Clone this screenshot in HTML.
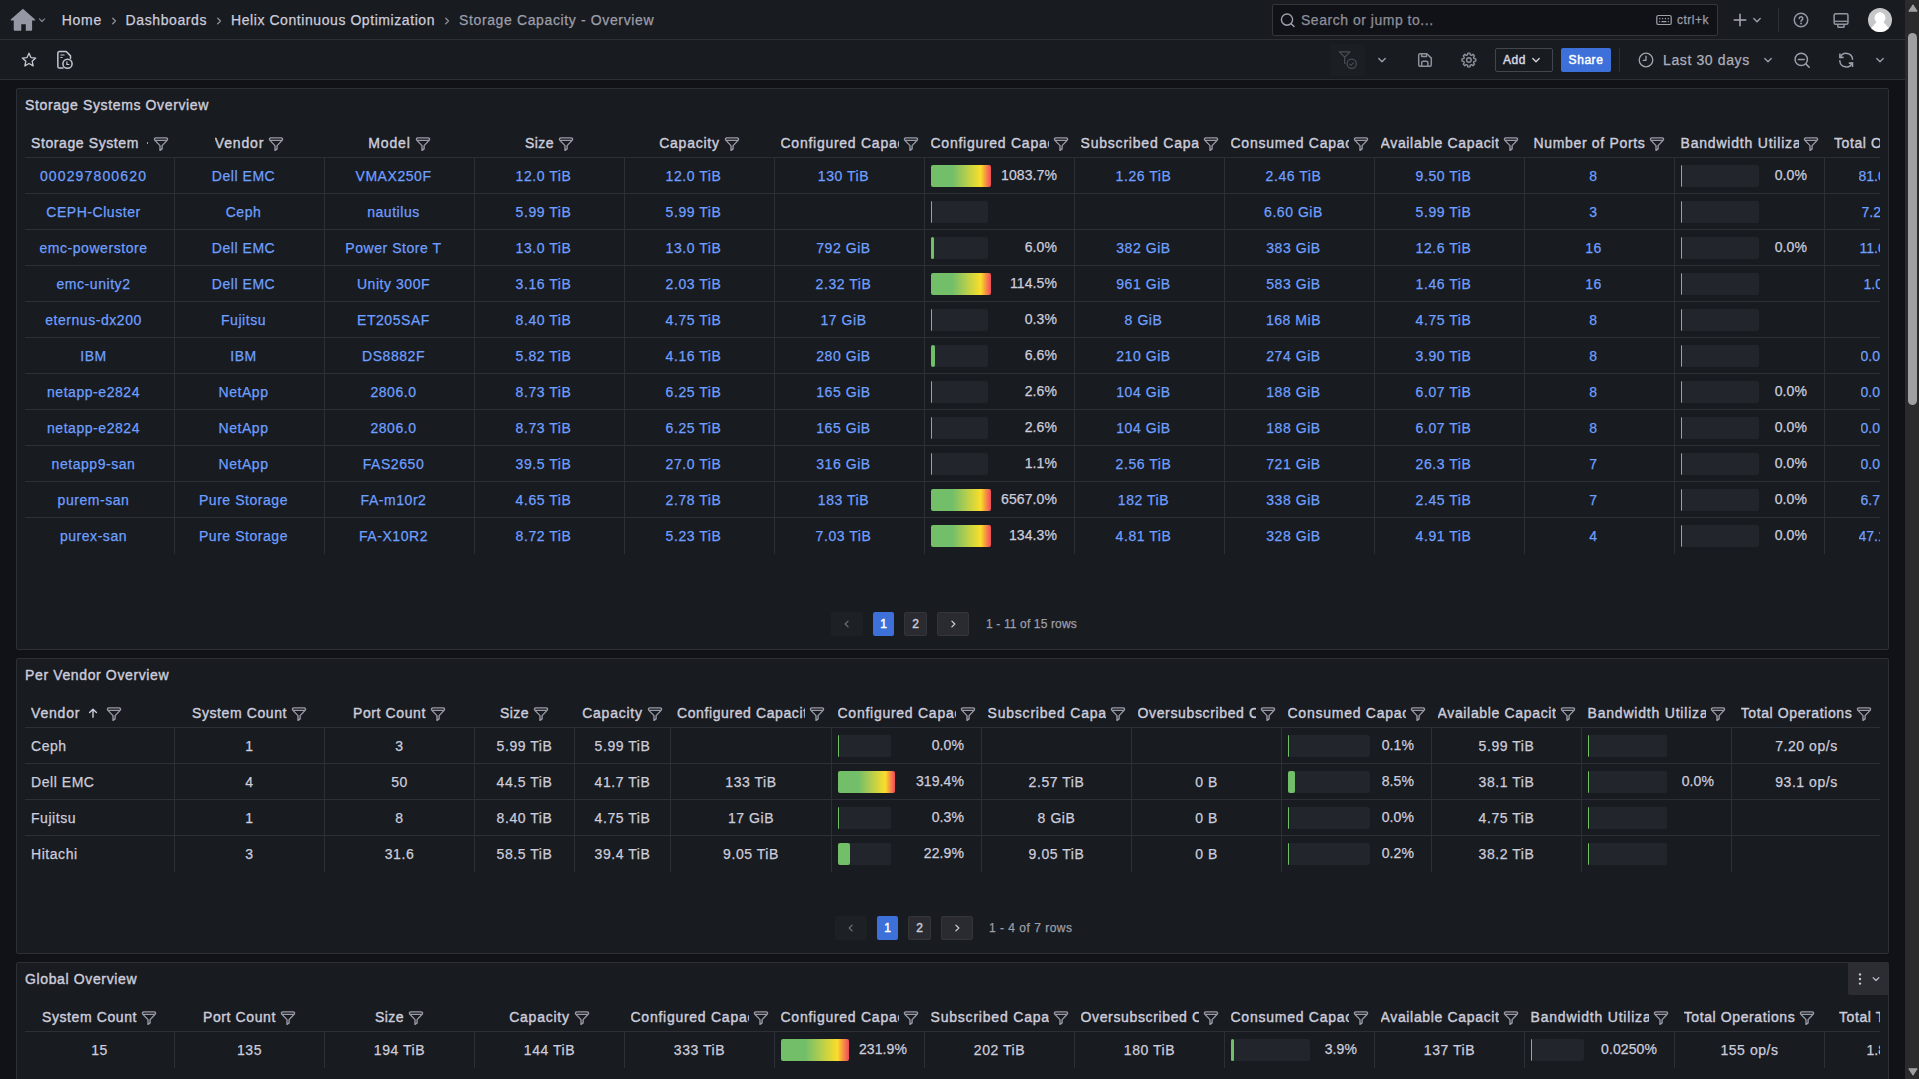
<!DOCTYPE html>
<html lang="en"><head><meta charset="utf-8"><title>Storage Capacity - Overview - Dashboards - Grafana</title>
<style>
*{box-sizing:border-box;margin:0;padding:0}
html,body{width:1919px;height:1079px;overflow:hidden;background:#111217}
body{font-family:"Liberation Sans",sans-serif;font-size:14px;color:#ccccdc;position:relative;letter-spacing:.55px;-webkit-text-stroke:.25px currentColor}
.abs{position:absolute}
.nav{position:absolute;left:0;top:0;width:1905px;height:40px;background:#181b1f;border-bottom:1px solid #2d2f36}
.tb{position:absolute;left:0;top:40px;width:1905px;height:40px;background:#181b1f;border-bottom:1px solid #2d2f36}
.t{position:absolute;white-space:nowrap;line-height:20px;height:20px}
.panel{position:absolute;left:16px;width:1873px;background:#181b1f;border:1px solid #2d2f36;border-radius:2px;overflow:hidden}
.ptitle{position:absolute;left:8px;top:6px;-webkit-text-stroke:.4px #ccccdc;letter-spacing:.63px;line-height:20px;white-space:nowrap;color:#ccccdc;font-size:14px}
.tbl{position:absolute;left:8px;width:1855px;overflow:hidden}
.hl{position:absolute;left:0;height:1px;width:1855px;background:#2d2f36}
.vl{position:absolute;width:1px;background:#2d2f36}
.c{position:absolute;height:36px;line-height:36px;text-align:center;white-space:nowrap;overflow:hidden}
.c.l{color:#6e9fff}
.h{position:absolute;top:6px;height:28px;line-height:28px;white-space:nowrap;-webkit-text-stroke:.4px #ccccdc;letter-spacing:.6px;color:#ccccdc;overflow:hidden;display:flex;justify-content:center;align-items:center;padding:0 6px}
.h span{display:block;overflow:hidden;max-width:118px;height:28px;flex:none}
.h svg{flex:none;margin-left:4px;margin-top:2px}
.g{position:absolute;height:22px;border-radius:2px}
.gt{position:absolute;height:22px;line-height:22px;text-align:right;white-space:nowrap;letter-spacing:.1px}
.pg{position:absolute;height:24px;border-radius:2px;text-align:center;line-height:24px;font-size:12px;-webkit-text-stroke:.45px currentColor;letter-spacing:0}
.sb{position:absolute;left:1905px;top:0;width:14px;height:1079px;background:#2b2b2b}
</style></head><body>

<div class="nav">
<svg class="abs" style="left:9px;top:7px" width="28" height="25" viewBox="0 0 28 25"><path d="M13.900 1.700L1.700 12.500Q1.100 13.400 2.300 13.400H4.750V22.800a1 1 0 0 0 1 1H12.250V17.200H16.800V23.800H22.100a1 1 0 0 0 1-1V13.400H25.500Q26.700 13.400 26.100 12.500Z" fill="#9697a4"/></svg>
<svg class="abs" style="left:37px;top:15px" width="10" height="10" viewBox="0 0 10 10"><path d="M2.400 3.900L5 6.500L7.600 3.900" fill="none" stroke="#7f808c" stroke-width="1.300" stroke-linecap="round" stroke-linejoin="round"/></svg>
<div class="t" style="left:61.8px;top:10px;color:#ccccdc;letter-spacing:0.7px">Home</div>
<div class="t" style="left:125.6px;top:10px;color:#ccccdc;letter-spacing:0.6px">Dashboards</div>
<div class="t" style="left:231px;top:10px;color:#ccccdc;letter-spacing:0.57px">Helix Continuous Optimization</div>
<div class="t" style="left:459px;top:10px;color:#9d9eaa;letter-spacing:0.63px">Storage Capacity - Overview</div>
<svg class="abs" style="left:108.8px;top:16.200px" width="10" height="10" viewBox="0 0 10 10"><path d="M3.700 2.200 L6.500 5 L3.700 7.800" fill="none" stroke="#8e8f9b" stroke-width="1.300" stroke-linecap="round" stroke-linejoin="round"/></svg>
<svg class="abs" style="left:213.6px;top:16.200px" width="10" height="10" viewBox="0 0 10 10"><path d="M3.700 2.200 L6.500 5 L3.700 7.800" fill="none" stroke="#8e8f9b" stroke-width="1.300" stroke-linecap="round" stroke-linejoin="round"/></svg>
<svg class="abs" style="left:441.9px;top:16.200px" width="10" height="10" viewBox="0 0 10 10"><path d="M3.700 2.200 L6.500 5 L3.700 7.800" fill="none" stroke="#8e8f9b" stroke-width="1.300" stroke-linecap="round" stroke-linejoin="round"/></svg>
<div class="abs" style="left:1272px;top:4px;width:446px;height:32px;background:#111217;border:1px solid #34363d;border-radius:2px"></div>
<svg class="abs" style="left:1279px;top:12px" width="17" height="17" viewBox="0 0 17 17"><circle cx="8" cy="7.6" r="5.6" fill="none" stroke="#9fa0ad" stroke-width="1.4"/><path d="M12.2 11.8 L15 14.6" stroke="#9fa0ad" stroke-width="1.4" stroke-linecap="round"/></svg>
<div class="t" style="left:1301px;top:10px;color:#8e8f9b;letter-spacing:.52px">Search or jump to...</div>
<svg class="abs" style="left:1656px;top:14px" width="16" height="12" viewBox="0 0 16 12"><rect x="0.8" y="1.5" width="14.4" height="9" rx="1.6" fill="none" stroke="#9fa0ad" stroke-width="1.2"/><path d="M3.2 4.6h1.2M6 4.6h1.2M8.8 4.6h1.2M11.6 4.6h1.2M3.2 7.6h1M5.6 7.6h4.8M11.8 7.6h1" stroke="#9fa0ad" stroke-width="1.1"/></svg>
<div class="t" style="left:1677px;top:10px;color:#9d9eaa;font-size:12px;letter-spacing:.5px">ctrl+k</div>
<svg class="abs" style="left:1733px;top:13px" width="14" height="14" viewBox="0 0 14 14"><path d="M7 1.2V12.8M1.2 7H12.8" stroke="#a9aab6" stroke-width="1.5" stroke-linecap="round"/></svg>
<svg class="abs" style="left:1752px;top:15px" width="10" height="10" viewBox="0 0 10 10"><path d="M1.800 3.600 L5 6.800 L8.200 3.600" fill="none" stroke="#9c9daa" stroke-width="1.400" stroke-linecap="round" stroke-linejoin="round"/></svg>
<div class="abs" style="left:1778px;top:8px;width:1px;height:24px;background:#2f3137"></div>
<svg class="abs" style="left:1792px;top:11px" width="18" height="18" viewBox="0 0 18 18"><circle cx="9" cy="9" r="6.750" fill="none" stroke="#9596a3" stroke-width="1.500"/><path d="M7.250 7.500a1.750 1.750 0 1 1 2.700 1.500c-.600.400-.950.700-.950 1.350" fill="none" stroke="#9596a3" stroke-width="1.500" stroke-linecap="round"/><circle cx="9" cy="12.500" r=".950" fill="#9596a3"/></svg>
<svg class="abs" style="left:1832px;top:11.500px" width="18" height="18" viewBox="0 0 18 18"><rect x="2.150" y="1.800" width="13.800" height="10.400" rx="1.500" fill="none" stroke="#9596a3" stroke-width="1.500"/><path d="M2.400 9.300H15.600" stroke="#9596a3" stroke-width="1.300"/><path d="M5.900 12.400v2.100a.8.800 0 0 0 .8.800h4.600a.8.800 0 0 0 .8-.8v-2.100" fill="none" stroke="#9596a3" stroke-width="1.500"/></svg>
<svg class="abs" style="left:1868px;top:8px" width="24" height="24" viewBox="0 0 24 24"><defs><clipPath id="av"><circle cx="12" cy="12" r="12"/></clipPath></defs><circle cx="12" cy="12" r="12" fill="#c6c7c8"/><g clip-path="url(#av)" fill="#fff"><circle cx="12" cy="9.800" r="5.500"/><path d="M9 13.400L0.200 23.600V25H23.800V23.600L15 13.400Z"/></g></svg>
</div>
<div class="tb">
<svg class="abs" style="left:20px;top:11px" width="18" height="18" viewBox="0 0 18 18"><path d="M9 2.2 L10.95 6.55 L15.7 7.05 L12.15 10.2 L13.15 14.9 L9 12.5 L4.85 14.9 L5.85 10.2 L2.3 7.05 L7.05 6.55 Z" fill="none" stroke="#c5c6d4" stroke-width="1.35" stroke-linejoin="round"/></svg>
<svg class="abs" style="left:56px;top:10px" width="20" height="20" viewBox="0 0 20 20"><path d="M7 18H3.450a1.600 1.600 0 0 1-1.600-1.600V3.150a1.600 1.600 0 0 1 1.600-1.600H10.200L14.500 5.900V8.400" fill="none" stroke="#c5c6d4" stroke-width="1.500" stroke-linejoin="round" stroke-linecap="round"/><path d="M4.400 5h4.200M4.400 7.500h2.100" stroke="#c5c6d4" stroke-width="1.100"/><circle cx="11.500" cy="13.750" r="4.600" fill="#181b1f" stroke="#c5c6d4" stroke-width="1.500"/><path d="M10.900 11.500v3h2.500" fill="none" stroke="#c5c6d4" stroke-width="1.200"/></svg>
<div class="abs" style="left:1330px;top:4px;width:35px;height:32px;background:#1b1e23;border-radius:2px"></div>
<svg class="abs" style="left:1337px;top:9px" width="24" height="22" viewBox="0 0 24 22"><path d="M2.400 2.800H13L7.700 8.200Z M7.700 8.200V15" fill="none" stroke="#4d4f58" stroke-width="1.200" stroke-linejoin="round" stroke-linecap="butt"/><circle cx="14.700" cy="14.750" r="4.600" fill="#1b1e23" stroke="#4d4f58" stroke-width="1.200"/><path d="M12.600 14.900l1.500 1.400 2.600-2.800" fill="none" stroke="#4d4f58" stroke-width="1.100"/></svg>
<svg class="abs" style="left:1377px;top:15px" width="10" height="10" viewBox="0 0 10 10"><path d="M1.800 3.600 L5 6.800 L8.200 3.600" fill="none" stroke="#9c9daa" stroke-width="1.400" stroke-linecap="round" stroke-linejoin="round"/></svg>
<svg class="abs" style="left:1416px;top:11px" width="18" height="18" viewBox="0 0 18 18"><path d="M4.200 2.700H10.800L15.300 7.100V13.800a1.500 1.500 0 0 1-1.500 1.500H4.200a1.500 1.500 0 0 1-1.500-1.500V4.200a1.500 1.500 0 0 1 1.500-1.500z" fill="none" stroke="#8e909d" stroke-width="1.500" stroke-linejoin="round"/><path d="M5.700 3v2.600h4.800V3M5.700 15.200v-3.400a1.500 1.500 0 0 1 1.500-1.500h3.200a1.500 1.500 0 0 1 1.500 1.500v3.400" fill="none" stroke="#8e909d" stroke-width="1.500" stroke-linejoin="round"/></svg>
<svg class="abs" style="left:1460px;top:11px" width="18" height="18" viewBox="0 0 18 18"><path d="M7.53 3.88 L7.80 2.09 L10.00 2.09 L10.27 3.88 L11.55 4.41 L13.01 3.34 L14.56 4.89 L13.49 6.35 L14.02 7.63 L15.81 7.90 L15.81 10.10 L14.02 10.37 L13.49 11.65 L14.56 13.11 L13.01 14.66 L11.55 13.59 L10.27 14.12 L10.00 15.91 L7.80 15.91 L7.53 14.12 L6.25 13.59 L4.79 14.66 L3.24 13.11 L4.31 11.65 L3.78 10.37 L1.99 10.10 L1.99 7.90 L3.78 7.63 L4.31 6.35 L3.24 4.89 L4.79 3.34 L6.25 4.41Z" fill="none" stroke="#8e909d" stroke-width="1.400" stroke-linejoin="round"/><circle cx="8.900" cy="9" r="2.300" fill="none" stroke="#8e909d" stroke-width="1.400"/></svg>
<div class="abs" style="left:1495px;top:8px;width:58px;height:24px;border:1px solid #44464e;border-radius:2px"></div>
<div class="t" style="left:1503px;top:10px;font-size:12px;-webkit-text-stroke:.45px #d5d6e2;color:#d5d6e2;letter-spacing:.5px">Add</div>
<svg class="abs" style="left:1531px;top:15px" width="10" height="10" viewBox="0 0 10 10"><path d="M1.800 3.600 L5 6.800 L8.200 3.600" fill="none" stroke="#d0d1dd" stroke-width="1.400" stroke-linecap="round" stroke-linejoin="round"/></svg>
<div class="abs" style="left:1561px;top:8px;width:50px;height:24px;background:#3d71d9;border-radius:2px"></div>
<div class="t" style="left:1561px;top:10px;width:50px;text-align:center;font-size:12px;-webkit-text-stroke:.45px #fff;color:#fff;letter-spacing:.55px">Share</div>
<div class="abs" style="left:1619px;top:8px;width:1px;height:24px;background:#2f3137"></div>
<svg class="abs" style="left:1637px;top:11px" width="18" height="18" viewBox="0 0 18 18"><circle cx="9" cy="9" r="6.800" fill="none" stroke="#a3a4b1" stroke-width="1.300"/><path d="M9 5.200V9.300H6.200" fill="none" stroke="#a3a4b1" stroke-width="1.300" stroke-linecap="round" stroke-linejoin="round"/></svg>
<div class="t" style="left:1663px;top:10px;color:#adaebd;letter-spacing:.62px">Last 30 days</div>
<svg class="abs" style="left:1763px;top:15px" width="10" height="10" viewBox="0 0 10 10"><path d="M1.800 3.600 L5 6.800 L8.200 3.600" fill="none" stroke="#9c9daa" stroke-width="1.400" stroke-linecap="round" stroke-linejoin="round"/></svg>
<svg class="abs" style="left:1792px;top:11px" width="19" height="18" viewBox="0 0 19 18"><circle cx="9.250" cy="8.400" r="6.150" fill="none" stroke="#9c9daa" stroke-width="1.500"/><path d="M6.300 8.400h5.900" stroke="#9c9daa" stroke-width="1.500" stroke-linecap="round"/><path d="M13.800 12.900l3.400 3.300" stroke="#9c9daa" stroke-width="1.600" stroke-linecap="round"/></svg>
<svg class="abs" style="left:1837px;top:11px" width="18" height="18" viewBox="0 0 18 18"><path d="M3.200 6.400A6.400 6.400 0 0 1 15.550 8.300M2.850 9.700A6.400 6.400 0 0 0 15.200 11.900" fill="none" stroke="#9c9daa" stroke-width="1.500" stroke-linecap="round"/><path d="M2.900 2.500v3.900h3.700M15.500 16v-3.900h-3.700" fill="none" stroke="#9c9daa" stroke-width="1.600" stroke-linecap="butt" stroke-linejoin="miter"/></svg>
<svg class="abs" style="left:1875px;top:15px" width="10" height="10" viewBox="0 0 10 10"><path d="M1.800 3.600 L5 6.800 L8.200 3.600" fill="none" stroke="#9c9daa" stroke-width="1.400" stroke-linecap="round" stroke-linejoin="round"/></svg>
</div>
<div class="sb"><svg class="abs" style="left:2.600px;top:4.400px" width="10" height="8" viewBox="0 0 10 8"><path d="M5 0.800L9.200 7.200H0.800z" fill="#a0a0a0" stroke="#a0a0a0" stroke-width="1" stroke-linejoin="round"/></svg><div class="abs" style="left:3px;top:33px;width:9px;height:372px;border-radius:5px;background:#a0a0a0"></div><svg class="abs" style="left:2.600px;top:1068.400px" width="10" height="8" viewBox="0 0 10 8"><path d="M5 7.200L9.200 0.800H0.800z" fill="#a0a0a0" stroke="#a0a0a0" stroke-width="1" stroke-linejoin="round"/></svg></div>
<div class="panel" style="top:88px;height:562px">
<div class="ptitle">Storage Systems Overview</div>
<div class="tbl" style="top:34px;height:431px">
<div class="h" style="left:0px;width:149px;justify-content:flex-start">
<span style="max-width:108px">Storage System</span>
<i style="display:block;flex:none;width:1px;height:2px;background:#a0a1ad;margin:0 5px 0 8px"></i>
<svg width="16" height="16" viewBox="0 0 16 16" style="margin-left:0"><path d="M3 1.900H13C14.600 1.900 15 3.400 14.100 4.400L9.100 9.600V12.900L7 14.400V9.600L1.900 4.400C1 3.400 1.400 1.900 3 1.900ZM2.200 4.400H13.800" fill="none" stroke="#9a9ba8" stroke-width="1.350" stroke-linejoin="round"/></svg>
</div>
<div class="h" style="left:150px;width:149px">
<span style="letter-spacing:0.82px">Vendor</span>
<svg width="16" height="16" viewBox="0 0 16 16" ><path d="M3 1.900H13C14.600 1.900 15 3.400 14.100 4.400L9.100 9.600V12.900L7 14.400V9.600L1.900 4.400C1 3.400 1.400 1.900 3 1.900ZM2.200 4.400H13.800" fill="none" stroke="#9a9ba8" stroke-width="1.350" stroke-linejoin="round"/></svg>
</div>
<div class="h" style="left:300px;width:149px">
<span style="letter-spacing:0.88px">Model</span>
<svg width="16" height="16" viewBox="0 0 16 16" ><path d="M3 1.900H13C14.600 1.900 15 3.400 14.100 4.400L9.100 9.600V12.900L7 14.400V9.600L1.900 4.400C1 3.400 1.400 1.900 3 1.900ZM2.200 4.400H13.800" fill="none" stroke="#9a9ba8" stroke-width="1.350" stroke-linejoin="round"/></svg>
</div>
<div class="h" style="left:450px;width:149px">
<span style="letter-spacing:0.45px">Size</span>
<svg width="16" height="16" viewBox="0 0 16 16" ><path d="M3 1.900H13C14.600 1.900 15 3.400 14.100 4.400L9.100 9.600V12.900L7 14.400V9.600L1.900 4.400C1 3.400 1.400 1.900 3 1.900ZM2.200 4.400H13.800" fill="none" stroke="#9a9ba8" stroke-width="1.350" stroke-linejoin="round"/></svg>
</div>
<div class="h" style="left:600px;width:149px">
<span style="letter-spacing:0.77px">Capacity</span>
<svg width="16" height="16" viewBox="0 0 16 16" ><path d="M3 1.900H13C14.600 1.900 15 3.400 14.100 4.400L9.100 9.600V12.900L7 14.400V9.600L1.900 4.400C1 3.400 1.400 1.900 3 1.900ZM2.200 4.400H13.800" fill="none" stroke="#9a9ba8" stroke-width="1.350" stroke-linejoin="round"/></svg>
</div>
<div class="h" style="left:750px;width:149px">
<span style="letter-spacing:0.74px">Configured Capacity</span>
<svg width="16" height="16" viewBox="0 0 16 16" ><path d="M3 1.900H13C14.600 1.900 15 3.400 14.100 4.400L9.100 9.600V12.900L7 14.400V9.600L1.900 4.400C1 3.400 1.400 1.900 3 1.900ZM2.200 4.400H13.800" fill="none" stroke="#9a9ba8" stroke-width="1.350" stroke-linejoin="round"/></svg>
</div>
<div class="h" style="left:900px;width:149px">
<span style="letter-spacing:0.74px">Configured Capacity</span>
<svg width="16" height="16" viewBox="0 0 16 16" ><path d="M3 1.900H13C14.600 1.900 15 3.400 14.100 4.400L9.100 9.600V12.900L7 14.400V9.600L1.900 4.400C1 3.400 1.400 1.900 3 1.900ZM2.200 4.400H13.800" fill="none" stroke="#9a9ba8" stroke-width="1.350" stroke-linejoin="round"/></svg>
</div>
<div class="h" style="left:1050px;width:149px">
<span style="letter-spacing:0.8px">Subscribed Capacity</span>
<svg width="16" height="16" viewBox="0 0 16 16" ><path d="M3 1.900H13C14.600 1.900 15 3.400 14.100 4.400L9.100 9.600V12.900L7 14.400V9.600L1.900 4.400C1 3.400 1.400 1.900 3 1.900ZM2.200 4.400H13.800" fill="none" stroke="#9a9ba8" stroke-width="1.350" stroke-linejoin="round"/></svg>
</div>
<div class="h" style="left:1200px;width:149px">
<span style="letter-spacing:0.75px">Consumed Capacity</span>
<svg width="16" height="16" viewBox="0 0 16 16" ><path d="M3 1.900H13C14.600 1.900 15 3.400 14.100 4.400L9.100 9.600V12.900L7 14.400V9.600L1.900 4.400C1 3.400 1.400 1.900 3 1.900ZM2.200 4.400H13.800" fill="none" stroke="#9a9ba8" stroke-width="1.350" stroke-linejoin="round"/></svg>
</div>
<div class="h" style="left:1350px;width:149px">
<span style="letter-spacing:0.66px">Available Capacity</span>
<svg width="16" height="16" viewBox="0 0 16 16" ><path d="M3 1.900H13C14.600 1.900 15 3.400 14.100 4.400L9.100 9.600V12.900L7 14.400V9.600L1.900 4.400C1 3.400 1.400 1.900 3 1.900ZM2.200 4.400H13.800" fill="none" stroke="#9a9ba8" stroke-width="1.350" stroke-linejoin="round"/></svg>
</div>
<div class="h" style="left:1500px;width:149px">
<span style="letter-spacing:0.67px">Number of Ports</span>
<svg width="16" height="16" viewBox="0 0 16 16" ><path d="M3 1.900H13C14.600 1.900 15 3.400 14.100 4.400L9.100 9.600V12.900L7 14.400V9.600L1.900 4.400C1 3.400 1.400 1.900 3 1.900ZM2.200 4.400H13.800" fill="none" stroke="#9a9ba8" stroke-width="1.350" stroke-linejoin="round"/></svg>
</div>
<div class="h" style="left:1650px;width:149px">
<span style="letter-spacing:0.8px">Bandwidth Utilization</span>
<svg width="16" height="16" viewBox="0 0 16 16" ><path d="M3 1.900H13C14.600 1.900 15 3.400 14.100 4.400L9.100 9.600V12.900L7 14.400V9.600L1.900 4.400C1 3.400 1.400 1.900 3 1.900ZM2.200 4.400H13.800" fill="none" stroke="#9a9ba8" stroke-width="1.350" stroke-linejoin="round"/></svg>
</div>
<div class="h" style="left:1800px;width:199px;justify-content:flex-start;padding-left:9px">
<span style="max-width:200px">Total Operations</span>
<svg width="16" height="16" viewBox="0 0 16 16" ><path d="M3 1.900H13C14.600 1.900 15 3.400 14.100 4.400L9.100 9.600V12.900L7 14.400V9.600L1.900 4.400C1 3.400 1.400 1.900 3 1.900ZM2.200 4.400H13.800" fill="none" stroke="#9a9ba8" stroke-width="1.350" stroke-linejoin="round"/></svg>
</div>
<div class="hl" style="top:34px"></div>
<div class="c l" style="left:0px;top:35px;width:137px;letter-spacing:1.15px">000297800620</div>
<div class="c l" style="left:150px;top:35px;width:137px">Dell EMC</div>
<div class="c l" style="left:300px;top:35px;width:137px">VMAX250F</div>
<div class="c l" style="left:450px;top:35px;width:137px">12.0 TiB</div>
<div class="c l" style="left:600px;top:35px;width:137px">12.0 TiB</div>
<div class="c l" style="left:750px;top:35px;width:137px">130 TiB</div>
<div class="g" style="left:906px;top:42px;width:60px;background:linear-gradient(90deg,#73bf69 0,#73bf69 36%,#a9cb53 55%,#fade2a 83%,#f58c44 92%,#f2495c 100%)"></div>
<div class="gt" style="left:950px;top:41px;width:82px">1083.7%</div>
<div class="c l" style="left:1050px;top:35px;width:137px">1.26 TiB</div>
<div class="c l" style="left:1200px;top:35px;width:137px">2.46 TiB</div>
<div class="c l" style="left:1350px;top:35px;width:137px">9.50 TiB</div>
<div class="c l" style="left:1500px;top:35px;width:137px">8</div>
<div class="g" style="left:1656px;top:42px;width:78px;background:#22252b"></div>
<div class="g" style="left:1656px;top:42px;width:1px;background:#73bf69;border-radius:1px 0 0 1px"></div>
<div class="gt" style="left:1700px;top:41px;width:82px">0.0%</div>
<div class="c l" style="left:1833.5px;top:35px;width:120px;text-align:left;letter-spacing:0">81.0 op/s</div>
<div class="hl" style="top:70px"></div>
<div class="c l" style="left:0px;top:71px;width:137px">CEPH-Cluster</div>
<div class="c l" style="left:150px;top:71px;width:137px">Ceph</div>
<div class="c l" style="left:300px;top:71px;width:137px">nautilus</div>
<div class="c l" style="left:450px;top:71px;width:137px">5.99 TiB</div>
<div class="c l" style="left:600px;top:71px;width:137px">5.99 TiB</div>
<div class="g" style="left:906px;top:78px;width:57px;background:#22252b"></div>
<div class="g" style="left:906px;top:78px;width:1px;background:#73bf69;border-radius:1px 0 0 1px"></div>
<div class="c l" style="left:1200px;top:71px;width:137px">6.60 GiB</div>
<div class="c l" style="left:1350px;top:71px;width:137px">5.99 TiB</div>
<div class="c l" style="left:1500px;top:71px;width:137px">3</div>
<div class="g" style="left:1656px;top:78px;width:78px;background:#22252b"></div>
<div class="g" style="left:1656px;top:78px;width:1px;background:#73bf69;border-radius:1px 0 0 1px"></div>
<div class="c l" style="left:1836.5px;top:71px;width:120px;text-align:left;letter-spacing:0">7.20 op/s</div>
<div class="hl" style="top:106px"></div>
<div class="c l" style="left:0px;top:107px;width:137px">emc-powerstore</div>
<div class="c l" style="left:150px;top:107px;width:137px">Dell EMC</div>
<div class="c l" style="left:300px;top:107px;width:137px">Power Store T</div>
<div class="c l" style="left:450px;top:107px;width:137px">13.0 TiB</div>
<div class="c l" style="left:600px;top:107px;width:137px">13.0 TiB</div>
<div class="c l" style="left:750px;top:107px;width:137px">792 GiB</div>
<div class="g" style="left:906px;top:114px;width:57px;background:#22252b"></div>
<div class="g" style="left:906px;top:114px;width:3px;background:#73bf69;border-radius:2px"></div>
<div class="gt" style="left:950px;top:113px;width:82px">6.0%</div>
<div class="c l" style="left:1050px;top:107px;width:137px">382 GiB</div>
<div class="c l" style="left:1200px;top:107px;width:137px">383 GiB</div>
<div class="c l" style="left:1350px;top:107px;width:137px">12.6 TiB</div>
<div class="c l" style="left:1500px;top:107px;width:137px">16</div>
<div class="g" style="left:1656px;top:114px;width:78px;background:#22252b"></div>
<div class="g" style="left:1656px;top:114px;width:1px;background:#73bf69;border-radius:1px 0 0 1px"></div>
<div class="gt" style="left:1700px;top:113px;width:82px">0.0%</div>
<div class="c l" style="left:1834.5px;top:107px;width:120px;text-align:left;letter-spacing:0">11.0 op/s</div>
<div class="hl" style="top:142px"></div>
<div class="c l" style="left:0px;top:143px;width:137px">emc-unity2</div>
<div class="c l" style="left:150px;top:143px;width:137px">Dell EMC</div>
<div class="c l" style="left:300px;top:143px;width:137px">Unity 300F</div>
<div class="c l" style="left:450px;top:143px;width:137px">3.16 TiB</div>
<div class="c l" style="left:600px;top:143px;width:137px">2.03 TiB</div>
<div class="c l" style="left:750px;top:143px;width:137px">2.32 TiB</div>
<div class="g" style="left:906px;top:150px;width:60px;background:linear-gradient(90deg,#73bf69 0,#73bf69 36%,#a9cb53 55%,#fade2a 83%,#f58c44 92%,#f2495c 100%)"></div>
<div class="gt" style="left:950px;top:149px;width:82px">114.5%</div>
<div class="c l" style="left:1050px;top:143px;width:137px">961 GiB</div>
<div class="c l" style="left:1200px;top:143px;width:137px">583 GiB</div>
<div class="c l" style="left:1350px;top:143px;width:137px">1.46 TiB</div>
<div class="c l" style="left:1500px;top:143px;width:137px">16</div>
<div class="g" style="left:1656px;top:150px;width:78px;background:#22252b"></div>
<div class="g" style="left:1656px;top:150px;width:1px;background:#73bf69;border-radius:1px 0 0 1px"></div>
<div class="c l" style="left:1838.5px;top:143px;width:120px;text-align:left;letter-spacing:0">1.00 op/s</div>
<div class="hl" style="top:178px"></div>
<div class="c l" style="left:0px;top:179px;width:137px">eternus-dx200</div>
<div class="c l" style="left:150px;top:179px;width:137px">Fujitsu</div>
<div class="c l" style="left:300px;top:179px;width:137px">ET205SAF</div>
<div class="c l" style="left:450px;top:179px;width:137px">8.40 TiB</div>
<div class="c l" style="left:600px;top:179px;width:137px">4.75 TiB</div>
<div class="c l" style="left:750px;top:179px;width:137px">17 GiB</div>
<div class="g" style="left:906px;top:186px;width:57px;background:#22252b"></div>
<div class="g" style="left:906px;top:186px;width:1px;background:#73bf69;border-radius:1px 0 0 1px"></div>
<div class="gt" style="left:950px;top:185px;width:82px">0.3%</div>
<div class="c l" style="left:1050px;top:179px;width:137px">8 GiB</div>
<div class="c l" style="left:1200px;top:179px;width:137px">168 MiB</div>
<div class="c l" style="left:1350px;top:179px;width:137px">4.75 TiB</div>
<div class="c l" style="left:1500px;top:179px;width:137px">8</div>
<div class="g" style="left:1656px;top:186px;width:78px;background:#22252b"></div>
<div class="g" style="left:1656px;top:186px;width:1px;background:#73bf69;border-radius:1px 0 0 1px"></div>
<div class="hl" style="top:214px"></div>
<div class="c l" style="left:0px;top:215px;width:137px">IBM</div>
<div class="c l" style="left:150px;top:215px;width:137px">IBM</div>
<div class="c l" style="left:300px;top:215px;width:137px">DS8882F</div>
<div class="c l" style="left:450px;top:215px;width:137px">5.82 TiB</div>
<div class="c l" style="left:600px;top:215px;width:137px">4.16 TiB</div>
<div class="c l" style="left:750px;top:215px;width:137px">280 GiB</div>
<div class="g" style="left:906px;top:222px;width:57px;background:#22252b"></div>
<div class="g" style="left:906px;top:222px;width:4px;background:#73bf69;border-radius:2px"></div>
<div class="gt" style="left:950px;top:221px;width:82px">6.6%</div>
<div class="c l" style="left:1050px;top:215px;width:137px">210 GiB</div>
<div class="c l" style="left:1200px;top:215px;width:137px">274 GiB</div>
<div class="c l" style="left:1350px;top:215px;width:137px">3.90 TiB</div>
<div class="c l" style="left:1500px;top:215px;width:137px">8</div>
<div class="g" style="left:1656px;top:222px;width:78px;background:#22252b"></div>
<div class="g" style="left:1656px;top:222px;width:1px;background:#73bf69;border-radius:1px 0 0 1px"></div>
<div class="c l" style="left:1835.5px;top:215px;width:120px;text-align:left;letter-spacing:0">0.0400 op/s</div>
<div class="hl" style="top:250px"></div>
<div class="c l" style="left:0px;top:251px;width:137px">netapp-e2824</div>
<div class="c l" style="left:150px;top:251px;width:137px">NetApp</div>
<div class="c l" style="left:300px;top:251px;width:137px">2806.0</div>
<div class="c l" style="left:450px;top:251px;width:137px">8.73 TiB</div>
<div class="c l" style="left:600px;top:251px;width:137px">6.25 TiB</div>
<div class="c l" style="left:750px;top:251px;width:137px">165 GiB</div>
<div class="g" style="left:906px;top:258px;width:57px;background:#22252b"></div>
<div class="g" style="left:906px;top:258px;width:1px;background:#73bf69;border-radius:1px 0 0 1px"></div>
<div class="gt" style="left:950px;top:257px;width:82px">2.6%</div>
<div class="c l" style="left:1050px;top:251px;width:137px">104 GiB</div>
<div class="c l" style="left:1200px;top:251px;width:137px">188 GiB</div>
<div class="c l" style="left:1350px;top:251px;width:137px">6.07 TiB</div>
<div class="c l" style="left:1500px;top:251px;width:137px">8</div>
<div class="g" style="left:1656px;top:258px;width:78px;background:#22252b"></div>
<div class="g" style="left:1656px;top:258px;width:1px;background:#73bf69;border-radius:1px 0 0 1px"></div>
<div class="gt" style="left:1700px;top:257px;width:82px">0.0%</div>
<div class="c l" style="left:1835.5px;top:251px;width:120px;text-align:left;letter-spacing:0">0.0200 op/s</div>
<div class="hl" style="top:286px"></div>
<div class="c l" style="left:0px;top:287px;width:137px">netapp-e2824</div>
<div class="c l" style="left:150px;top:287px;width:137px">NetApp</div>
<div class="c l" style="left:300px;top:287px;width:137px">2806.0</div>
<div class="c l" style="left:450px;top:287px;width:137px">8.73 TiB</div>
<div class="c l" style="left:600px;top:287px;width:137px">6.25 TiB</div>
<div class="c l" style="left:750px;top:287px;width:137px">165 GiB</div>
<div class="g" style="left:906px;top:294px;width:57px;background:#22252b"></div>
<div class="g" style="left:906px;top:294px;width:1px;background:#73bf69;border-radius:1px 0 0 1px"></div>
<div class="gt" style="left:950px;top:293px;width:82px">2.6%</div>
<div class="c l" style="left:1050px;top:287px;width:137px">104 GiB</div>
<div class="c l" style="left:1200px;top:287px;width:137px">188 GiB</div>
<div class="c l" style="left:1350px;top:287px;width:137px">6.07 TiB</div>
<div class="c l" style="left:1500px;top:287px;width:137px">8</div>
<div class="g" style="left:1656px;top:294px;width:78px;background:#22252b"></div>
<div class="g" style="left:1656px;top:294px;width:1px;background:#73bf69;border-radius:1px 0 0 1px"></div>
<div class="gt" style="left:1700px;top:293px;width:82px">0.0%</div>
<div class="c l" style="left:1835.5px;top:287px;width:120px;text-align:left;letter-spacing:0">0.0200 op/s</div>
<div class="hl" style="top:322px"></div>
<div class="c l" style="left:0px;top:323px;width:137px">netapp9-san</div>
<div class="c l" style="left:150px;top:323px;width:137px">NetApp</div>
<div class="c l" style="left:300px;top:323px;width:137px">FAS2650</div>
<div class="c l" style="left:450px;top:323px;width:137px">39.5 TiB</div>
<div class="c l" style="left:600px;top:323px;width:137px">27.0 TiB</div>
<div class="c l" style="left:750px;top:323px;width:137px">316 GiB</div>
<div class="g" style="left:906px;top:330px;width:57px;background:#22252b"></div>
<div class="g" style="left:906px;top:330px;width:1px;background:#73bf69;border-radius:1px 0 0 1px"></div>
<div class="gt" style="left:950px;top:329px;width:82px">1.1%</div>
<div class="c l" style="left:1050px;top:323px;width:137px">2.56 TiB</div>
<div class="c l" style="left:1200px;top:323px;width:137px">721 GiB</div>
<div class="c l" style="left:1350px;top:323px;width:137px">26.3 TiB</div>
<div class="c l" style="left:1500px;top:323px;width:137px">7</div>
<div class="g" style="left:1656px;top:330px;width:78px;background:#22252b"></div>
<div class="g" style="left:1656px;top:330px;width:1px;background:#73bf69;border-radius:1px 0 0 1px"></div>
<div class="gt" style="left:1700px;top:329px;width:82px">0.0%</div>
<div class="c l" style="left:1835.5px;top:323px;width:120px;text-align:left;letter-spacing:0">0.0100 op/s</div>
<div class="hl" style="top:358px"></div>
<div class="c l" style="left:0px;top:359px;width:137px">purem-san</div>
<div class="c l" style="left:150px;top:359px;width:137px">Pure Storage</div>
<div class="c l" style="left:300px;top:359px;width:137px">FA-m10r2</div>
<div class="c l" style="left:450px;top:359px;width:137px">4.65 TiB</div>
<div class="c l" style="left:600px;top:359px;width:137px">2.78 TiB</div>
<div class="c l" style="left:750px;top:359px;width:137px">183 TiB</div>
<div class="g" style="left:906px;top:366px;width:60px;background:linear-gradient(90deg,#73bf69 0,#73bf69 36%,#a9cb53 55%,#fade2a 83%,#f58c44 92%,#f2495c 100%)"></div>
<div class="gt" style="left:950px;top:365px;width:82px">6567.0%</div>
<div class="c l" style="left:1050px;top:359px;width:137px">182 TiB</div>
<div class="c l" style="left:1200px;top:359px;width:137px">338 GiB</div>
<div class="c l" style="left:1350px;top:359px;width:137px">2.45 TiB</div>
<div class="c l" style="left:1500px;top:359px;width:137px">7</div>
<div class="g" style="left:1656px;top:366px;width:78px;background:#22252b"></div>
<div class="g" style="left:1656px;top:366px;width:1px;background:#73bf69;border-radius:1px 0 0 1px"></div>
<div class="gt" style="left:1700px;top:365px;width:82px">0.0%</div>
<div class="c l" style="left:1835.5px;top:359px;width:120px;text-align:left;letter-spacing:0">6.70 op/s</div>
<div class="hl" style="top:394px"></div>
<div class="c l" style="left:0px;top:395px;width:137px">purex-san</div>
<div class="c l" style="left:150px;top:395px;width:137px">Pure Storage</div>
<div class="c l" style="left:300px;top:395px;width:137px">FA-X10R2</div>
<div class="c l" style="left:450px;top:395px;width:137px">8.72 TiB</div>
<div class="c l" style="left:600px;top:395px;width:137px">5.23 TiB</div>
<div class="c l" style="left:750px;top:395px;width:137px">7.03 TiB</div>
<div class="g" style="left:906px;top:402px;width:60px;background:linear-gradient(90deg,#73bf69 0,#73bf69 36%,#a9cb53 55%,#fade2a 83%,#f58c44 92%,#f2495c 100%)"></div>
<div class="gt" style="left:950px;top:401px;width:82px">134.3%</div>
<div class="c l" style="left:1050px;top:395px;width:137px">4.81 TiB</div>
<div class="c l" style="left:1200px;top:395px;width:137px">328 GiB</div>
<div class="c l" style="left:1350px;top:395px;width:137px">4.91 TiB</div>
<div class="c l" style="left:1500px;top:395px;width:137px">4</div>
<div class="g" style="left:1656px;top:402px;width:78px;background:#22252b"></div>
<div class="g" style="left:1656px;top:402px;width:1px;background:#73bf69;border-radius:1px 0 0 1px"></div>
<div class="gt" style="left:1700px;top:401px;width:82px">0.0%</div>
<div class="c l" style="left:1833.5px;top:395px;width:120px;text-align:left;letter-spacing:0">47.1 op/s</div>
<div class="vl" style="left:149px;top:34px;height:397px"></div>
<div class="vl" style="left:299px;top:34px;height:397px"></div>
<div class="vl" style="left:449px;top:34px;height:397px"></div>
<div class="vl" style="left:599px;top:34px;height:397px"></div>
<div class="vl" style="left:749px;top:34px;height:397px"></div>
<div class="vl" style="left:899px;top:34px;height:397px"></div>
<div class="vl" style="left:1049px;top:34px;height:397px"></div>
<div class="vl" style="left:1199px;top:34px;height:397px"></div>
<div class="vl" style="left:1349px;top:34px;height:397px"></div>
<div class="vl" style="left:1499px;top:34px;height:397px"></div>
<div class="vl" style="left:1649px;top:34px;height:397px"></div>
<div class="vl" style="left:1799px;top:34px;height:397px"></div>
</div>
<div class="pg" style="left:814px;top:523px;width:32px;background:#1d2025"><svg width="10" height="10" viewBox="0 0 10 10" style="position:absolute;left:11px;top:7px"><path d="M6.100 2.100L3.200 5l2.900 2.900" fill="none" stroke="#6c6d78" stroke-width="1.300" stroke-linecap="round" stroke-linejoin="round"/></svg></div>
<div class="pg" style="left:856px;top:523px;width:21px;background:#3d71d9;color:#fff">1</div>
<div class="pg" style="left:887px;top:523px;width:23px;background:#292b31;color:#ccccdc;border:1px solid #33353b;line-height:22px">2</div>
<div class="pg" style="left:920px;top:523px;width:32px;background:#292b31;border:1px solid #33353b"><svg width="10" height="10" viewBox="0 0 10 10" style="position:absolute;left:10px;top:6px"><path d="M3.900 2.100L6.800 5l-2.900 2.900" fill="none" stroke="#ccccdc" stroke-width="1.300" stroke-linecap="round" stroke-linejoin="round"/></svg></div>
<div class="t" style="left:969px;top:525px;font-size:12px;color:#9d9eaa;letter-spacing:0.14px">1 - 11 of 15 rows</div>
</div>
<div class="panel" style="top:658px;height:296px">
<div class="ptitle">Per Vendor Overview</div>
<div class="tbl" style="top:34px;height:179px">
<div class="h" style="left:0px;width:149px;justify-content:flex-start">
<span style="letter-spacing:0.82px">Vendor</span>
<svg width="12" height="12" viewBox="0 0 12 12" style="margin-left:7px;margin-top:0"><path d="M6 10.300V2.400M2.600 5.600L6 2.200l3.400 3.400" fill="none" stroke="#ccccdc" stroke-width="1.400" stroke-linecap="round" stroke-linejoin="round"/></svg>
<svg width="16" height="16" viewBox="0 0 16 16" style="margin-left:7px"><path d="M3 1.900H13C14.600 1.900 15 3.400 14.100 4.400L9.100 9.600V12.900L7 14.400V9.600L1.900 4.400C1 3.400 1.400 1.900 3 1.900ZM2.200 4.400H13.800" fill="none" stroke="#9a9ba8" stroke-width="1.350" stroke-linejoin="round"/></svg>
</div>
<div class="h" style="left:150px;width:149px">
<span>System Count</span>
<svg width="16" height="16" viewBox="0 0 16 16" ><path d="M3 1.900H13C14.600 1.900 15 3.400 14.100 4.400L9.100 9.600V12.900L7 14.400V9.600L1.900 4.400C1 3.400 1.400 1.900 3 1.900ZM2.200 4.400H13.800" fill="none" stroke="#9a9ba8" stroke-width="1.350" stroke-linejoin="round"/></svg>
</div>
<div class="h" style="left:300px;width:149px">
<span>Port Count</span>
<svg width="16" height="16" viewBox="0 0 16 16" ><path d="M3 1.900H13C14.600 1.900 15 3.400 14.100 4.400L9.100 9.600V12.900L7 14.400V9.600L1.900 4.400C1 3.400 1.400 1.900 3 1.900ZM2.200 4.400H13.800" fill="none" stroke="#9a9ba8" stroke-width="1.350" stroke-linejoin="round"/></svg>
</div>
<div class="h" style="left:450px;width:99px">
<span style="letter-spacing:0.45px">Size</span>
<svg width="16" height="16" viewBox="0 0 16 16" ><path d="M3 1.900H13C14.600 1.900 15 3.400 14.100 4.400L9.100 9.600V12.900L7 14.400V9.600L1.900 4.400C1 3.400 1.400 1.900 3 1.900ZM2.200 4.400H13.800" fill="none" stroke="#9a9ba8" stroke-width="1.350" stroke-linejoin="round"/></svg>
</div>
<div class="h" style="left:550px;width:95px">
<span style="letter-spacing:0.77px">Capacity</span>
<svg width="16" height="16" viewBox="0 0 16 16" ><path d="M3 1.900H13C14.600 1.900 15 3.400 14.100 4.400L9.100 9.600V12.900L7 14.400V9.600L1.900 4.400C1 3.400 1.400 1.900 3 1.900ZM2.200 4.400H13.800" fill="none" stroke="#9a9ba8" stroke-width="1.350" stroke-linejoin="round"/></svg>
</div>
<div class="h" style="left:646px;width:160px">
<span style="max-width:128px">Configured Capacity</span>
<svg width="16" height="16" viewBox="0 0 16 16" ><path d="M3 1.900H13C14.600 1.900 15 3.400 14.100 4.400L9.100 9.600V12.900L7 14.400V9.600L1.900 4.400C1 3.400 1.400 1.900 3 1.900ZM2.200 4.400H13.800" fill="none" stroke="#9a9ba8" stroke-width="1.350" stroke-linejoin="round"/></svg>
</div>
<div class="h" style="left:807px;width:149px">
<span style="letter-spacing:0.74px">Configured Capacity</span>
<svg width="16" height="16" viewBox="0 0 16 16" ><path d="M3 1.900H13C14.600 1.900 15 3.400 14.100 4.400L9.100 9.600V12.900L7 14.400V9.600L1.900 4.400C1 3.400 1.400 1.900 3 1.900ZM2.200 4.400H13.800" fill="none" stroke="#9a9ba8" stroke-width="1.350" stroke-linejoin="round"/></svg>
</div>
<div class="h" style="left:957px;width:149px">
<span style="letter-spacing:0.8px">Subscribed Capacity</span>
<svg width="16" height="16" viewBox="0 0 16 16" ><path d="M3 1.900H13C14.600 1.900 15 3.400 14.100 4.400L9.100 9.600V12.900L7 14.400V9.600L1.900 4.400C1 3.400 1.400 1.900 3 1.900ZM2.200 4.400H13.800" fill="none" stroke="#9a9ba8" stroke-width="1.350" stroke-linejoin="round"/></svg>
</div>
<div class="h" style="left:1107px;width:149px">
<span style="letter-spacing:0.64px">Oversubscribed Capacity</span>
<svg width="16" height="16" viewBox="0 0 16 16" ><path d="M3 1.900H13C14.600 1.900 15 3.400 14.100 4.400L9.100 9.600V12.900L7 14.400V9.600L1.900 4.400C1 3.400 1.400 1.900 3 1.900ZM2.200 4.400H13.800" fill="none" stroke="#9a9ba8" stroke-width="1.350" stroke-linejoin="round"/></svg>
</div>
<div class="h" style="left:1257px;width:149px">
<span style="letter-spacing:0.75px">Consumed Capacity</span>
<svg width="16" height="16" viewBox="0 0 16 16" ><path d="M3 1.900H13C14.600 1.900 15 3.400 14.100 4.400L9.100 9.600V12.900L7 14.400V9.600L1.900 4.400C1 3.400 1.400 1.900 3 1.900ZM2.200 4.400H13.800" fill="none" stroke="#9a9ba8" stroke-width="1.350" stroke-linejoin="round"/></svg>
</div>
<div class="h" style="left:1407px;width:149px">
<span style="letter-spacing:0.66px">Available Capacity</span>
<svg width="16" height="16" viewBox="0 0 16 16" ><path d="M3 1.900H13C14.600 1.900 15 3.400 14.100 4.400L9.100 9.600V12.900L7 14.400V9.600L1.900 4.400C1 3.400 1.400 1.900 3 1.900ZM2.200 4.400H13.800" fill="none" stroke="#9a9ba8" stroke-width="1.350" stroke-linejoin="round"/></svg>
</div>
<div class="h" style="left:1557px;width:149px">
<span style="letter-spacing:0.8px">Bandwidth Utilization</span>
<svg width="16" height="16" viewBox="0 0 16 16" ><path d="M3 1.900H13C14.600 1.900 15 3.400 14.100 4.400L9.100 9.600V12.900L7 14.400V9.600L1.900 4.400C1 3.400 1.400 1.900 3 1.900ZM2.200 4.400H13.800" fill="none" stroke="#9a9ba8" stroke-width="1.350" stroke-linejoin="round"/></svg>
</div>
<div class="h" style="left:1707px;width:149px">
<span>Total Operations</span>
<svg width="16" height="16" viewBox="0 0 16 16" ><path d="M3 1.900H13C14.600 1.900 15 3.400 14.100 4.400L9.100 9.600V12.900L7 14.400V9.600L1.900 4.400C1 3.400 1.400 1.900 3 1.900ZM2.200 4.400H13.800" fill="none" stroke="#9a9ba8" stroke-width="1.350" stroke-linejoin="round"/></svg>
</div>
<div class="hl" style="top:34px"></div>
<div class="c" style="left:6px;top:35px;width:138px;text-align:left">Ceph</div>
<div class="c" style="left:150px;top:35px;width:149px">1</div>
<div class="c" style="left:300px;top:35px;width:149px">3</div>
<div class="c" style="left:450px;top:35px;width:99px">5.99 TiB</div>
<div class="c" style="left:550px;top:35px;width:95px">5.99 TiB</div>
<div class="g" style="left:813px;top:42px;width:53px;background:#22252b"></div>
<div class="g" style="left:813px;top:42px;width:1px;background:#73bf69;border-radius:1px 0 0 1px"></div>
<div class="gt" style="left:857px;top:41px;width:82px">0.0%</div>
<div class="g" style="left:1263px;top:42px;width:82px;background:#22252b"></div>
<div class="g" style="left:1263px;top:42px;width:1px;background:#73bf69;border-radius:1px 0 0 1px"></div>
<div class="gt" style="left:1307px;top:41px;width:82px">0.1%</div>
<div class="c" style="left:1407px;top:35px;width:149px">5.99 TiB</div>
<div class="g" style="left:1563px;top:42px;width:79px;background:#22252b"></div>
<div class="g" style="left:1563px;top:42px;width:1px;background:#73bf69;border-radius:1px 0 0 1px"></div>
<div class="c" style="left:1707px;top:35px;width:149px">7.20 op/s</div>
<div class="hl" style="top:70px"></div>
<div class="c" style="left:6px;top:71px;width:138px;text-align:left">Dell EMC</div>
<div class="c" style="left:150px;top:71px;width:149px">4</div>
<div class="c" style="left:300px;top:71px;width:149px">50</div>
<div class="c" style="left:450px;top:71px;width:99px">44.5 TiB</div>
<div class="c" style="left:550px;top:71px;width:95px">41.7 TiB</div>
<div class="c" style="left:646px;top:71px;width:160px">133 TiB</div>
<div class="g" style="left:813px;top:78px;width:57px;background:linear-gradient(90deg,#73bf69 0,#73bf69 36%,#a9cb53 55%,#fade2a 83%,#f58c44 92%,#f2495c 100%)"></div>
<div class="gt" style="left:857px;top:77px;width:82px">319.4%</div>
<div class="c" style="left:957px;top:71px;width:149px">2.57 TiB</div>
<div class="c" style="left:1107px;top:71px;width:149px">0 B</div>
<div class="g" style="left:1263px;top:78px;width:82px;background:#22252b"></div>
<div class="g" style="left:1263px;top:78px;width:7px;background:#73bf69;border-radius:2px"></div>
<div class="gt" style="left:1307px;top:77px;width:82px">8.5%</div>
<div class="c" style="left:1407px;top:71px;width:149px">38.1 TiB</div>
<div class="g" style="left:1563px;top:78px;width:79px;background:#22252b"></div>
<div class="g" style="left:1563px;top:78px;width:1px;background:#73bf69;border-radius:1px 0 0 1px"></div>
<div class="gt" style="left:1607px;top:77px;width:82px">0.0%</div>
<div class="c" style="left:1707px;top:71px;width:149px">93.1 op/s</div>
<div class="hl" style="top:106px"></div>
<div class="c" style="left:6px;top:107px;width:138px;text-align:left">Fujitsu</div>
<div class="c" style="left:150px;top:107px;width:149px">1</div>
<div class="c" style="left:300px;top:107px;width:149px">8</div>
<div class="c" style="left:450px;top:107px;width:99px">8.40 TiB</div>
<div class="c" style="left:550px;top:107px;width:95px">4.75 TiB</div>
<div class="c" style="left:646px;top:107px;width:160px">17 GiB</div>
<div class="g" style="left:813px;top:114px;width:53px;background:#22252b"></div>
<div class="g" style="left:813px;top:114px;width:1px;background:#73bf69;border-radius:1px 0 0 1px"></div>
<div class="gt" style="left:857px;top:113px;width:82px">0.3%</div>
<div class="c" style="left:957px;top:107px;width:149px">8 GiB</div>
<div class="c" style="left:1107px;top:107px;width:149px">0 B</div>
<div class="g" style="left:1263px;top:114px;width:82px;background:#22252b"></div>
<div class="g" style="left:1263px;top:114px;width:1px;background:#73bf69;border-radius:1px 0 0 1px"></div>
<div class="gt" style="left:1307px;top:113px;width:82px">0.0%</div>
<div class="c" style="left:1407px;top:107px;width:149px">4.75 TiB</div>
<div class="g" style="left:1563px;top:114px;width:79px;background:#22252b"></div>
<div class="g" style="left:1563px;top:114px;width:1px;background:#73bf69;border-radius:1px 0 0 1px"></div>
<div class="hl" style="top:142px"></div>
<div class="c" style="left:6px;top:143px;width:138px;text-align:left">Hitachi</div>
<div class="c" style="left:150px;top:143px;width:149px">3</div>
<div class="c" style="left:300px;top:143px;width:149px">31.6</div>
<div class="c" style="left:450px;top:143px;width:99px">58.5 TiB</div>
<div class="c" style="left:550px;top:143px;width:95px">39.4 TiB</div>
<div class="c" style="left:646px;top:143px;width:160px">9.05 TiB</div>
<div class="g" style="left:813px;top:150px;width:53px;background:#22252b"></div>
<div class="g" style="left:813px;top:150px;width:12px;background:#73bf69;border-radius:2px"></div>
<div class="gt" style="left:857px;top:149px;width:82px">22.9%</div>
<div class="c" style="left:957px;top:143px;width:149px">9.05 TiB</div>
<div class="c" style="left:1107px;top:143px;width:149px">0 B</div>
<div class="g" style="left:1263px;top:150px;width:82px;background:#22252b"></div>
<div class="g" style="left:1263px;top:150px;width:1px;background:#73bf69;border-radius:1px 0 0 1px"></div>
<div class="gt" style="left:1307px;top:149px;width:82px">0.2%</div>
<div class="c" style="left:1407px;top:143px;width:149px">38.2 TiB</div>
<div class="g" style="left:1563px;top:150px;width:79px;background:#22252b"></div>
<div class="g" style="left:1563px;top:150px;width:1px;background:#73bf69;border-radius:1px 0 0 1px"></div>
<div class="vl" style="left:149px;top:34px;height:145px"></div>
<div class="vl" style="left:299px;top:34px;height:145px"></div>
<div class="vl" style="left:449px;top:34px;height:145px"></div>
<div class="vl" style="left:549px;top:34px;height:145px"></div>
<div class="vl" style="left:645px;top:34px;height:145px"></div>
<div class="vl" style="left:806px;top:34px;height:145px"></div>
<div class="vl" style="left:956px;top:34px;height:145px"></div>
<div class="vl" style="left:1106px;top:34px;height:145px"></div>
<div class="vl" style="left:1256px;top:34px;height:145px"></div>
<div class="vl" style="left:1406px;top:34px;height:145px"></div>
<div class="vl" style="left:1556px;top:34px;height:145px"></div>
<div class="vl" style="left:1706px;top:34px;height:145px"></div>
</div>
<div class="pg" style="left:818px;top:257px;width:32px;background:#1d2025"><svg width="10" height="10" viewBox="0 0 10 10" style="position:absolute;left:11px;top:7px"><path d="M6.100 2.100L3.200 5l2.900 2.900" fill="none" stroke="#6c6d78" stroke-width="1.300" stroke-linecap="round" stroke-linejoin="round"/></svg></div>
<div class="pg" style="left:860px;top:257px;width:21px;background:#3d71d9;color:#fff">1</div>
<div class="pg" style="left:891px;top:257px;width:23px;background:#292b31;color:#ccccdc;border:1px solid #33353b;line-height:22px">2</div>
<div class="pg" style="left:924px;top:257px;width:32px;background:#292b31;border:1px solid #33353b"><svg width="10" height="10" viewBox="0 0 10 10" style="position:absolute;left:10px;top:6px"><path d="M3.900 2.100L6.800 5l-2.900 2.900" fill="none" stroke="#ccccdc" stroke-width="1.300" stroke-linecap="round" stroke-linejoin="round"/></svg></div>
<div class="t" style="left:972px;top:259px;font-size:12px;color:#9d9eaa;letter-spacing:0.5px">1 - 4 of 7 rows</div>
</div>
<div class="panel" style="top:962px;height:140px">
<div class="ptitle">Global Overview</div>
<div class="tbl" style="top:34px;height:71px">
<div class="h" style="left:0px;width:149px">
<span>System Count</span>
<svg width="16" height="16" viewBox="0 0 16 16" ><path d="M3 1.900H13C14.600 1.900 15 3.400 14.100 4.400L9.100 9.600V12.900L7 14.400V9.600L1.900 4.400C1 3.400 1.400 1.900 3 1.900ZM2.200 4.400H13.800" fill="none" stroke="#9a9ba8" stroke-width="1.350" stroke-linejoin="round"/></svg>
</div>
<div class="h" style="left:150px;width:149px">
<span>Port Count</span>
<svg width="16" height="16" viewBox="0 0 16 16" ><path d="M3 1.900H13C14.600 1.900 15 3.400 14.100 4.400L9.100 9.600V12.900L7 14.400V9.600L1.900 4.400C1 3.400 1.400 1.900 3 1.900ZM2.200 4.400H13.800" fill="none" stroke="#9a9ba8" stroke-width="1.350" stroke-linejoin="round"/></svg>
</div>
<div class="h" style="left:300px;width:149px">
<span style="letter-spacing:0.45px">Size</span>
<svg width="16" height="16" viewBox="0 0 16 16" ><path d="M3 1.900H13C14.600 1.900 15 3.400 14.100 4.400L9.100 9.600V12.900L7 14.400V9.600L1.900 4.400C1 3.400 1.400 1.900 3 1.900ZM2.200 4.400H13.800" fill="none" stroke="#9a9ba8" stroke-width="1.350" stroke-linejoin="round"/></svg>
</div>
<div class="h" style="left:450px;width:149px">
<span style="letter-spacing:0.77px">Capacity</span>
<svg width="16" height="16" viewBox="0 0 16 16" ><path d="M3 1.900H13C14.600 1.900 15 3.400 14.100 4.400L9.100 9.600V12.900L7 14.400V9.600L1.900 4.400C1 3.400 1.400 1.900 3 1.900ZM2.200 4.400H13.800" fill="none" stroke="#9a9ba8" stroke-width="1.350" stroke-linejoin="round"/></svg>
</div>
<div class="h" style="left:600px;width:149px">
<span style="letter-spacing:0.74px">Configured Capacity</span>
<svg width="16" height="16" viewBox="0 0 16 16" ><path d="M3 1.900H13C14.600 1.900 15 3.400 14.100 4.400L9.100 9.600V12.900L7 14.400V9.600L1.900 4.400C1 3.400 1.400 1.900 3 1.900ZM2.200 4.400H13.800" fill="none" stroke="#9a9ba8" stroke-width="1.350" stroke-linejoin="round"/></svg>
</div>
<div class="h" style="left:750px;width:149px">
<span style="letter-spacing:0.74px">Configured Capacity</span>
<svg width="16" height="16" viewBox="0 0 16 16" ><path d="M3 1.900H13C14.600 1.900 15 3.400 14.100 4.400L9.100 9.600V12.900L7 14.400V9.600L1.900 4.400C1 3.400 1.400 1.900 3 1.900ZM2.200 4.400H13.800" fill="none" stroke="#9a9ba8" stroke-width="1.350" stroke-linejoin="round"/></svg>
</div>
<div class="h" style="left:900px;width:149px">
<span style="letter-spacing:0.8px">Subscribed Capacity</span>
<svg width="16" height="16" viewBox="0 0 16 16" ><path d="M3 1.900H13C14.600 1.900 15 3.400 14.100 4.400L9.100 9.600V12.900L7 14.400V9.600L1.900 4.400C1 3.400 1.400 1.900 3 1.900ZM2.200 4.400H13.800" fill="none" stroke="#9a9ba8" stroke-width="1.350" stroke-linejoin="round"/></svg>
</div>
<div class="h" style="left:1050px;width:149px">
<span style="letter-spacing:0.64px">Oversubscribed Capacity</span>
<svg width="16" height="16" viewBox="0 0 16 16" ><path d="M3 1.900H13C14.600 1.900 15 3.400 14.100 4.400L9.100 9.600V12.900L7 14.400V9.600L1.900 4.400C1 3.400 1.400 1.900 3 1.900ZM2.200 4.400H13.800" fill="none" stroke="#9a9ba8" stroke-width="1.350" stroke-linejoin="round"/></svg>
</div>
<div class="h" style="left:1200px;width:149px">
<span style="letter-spacing:0.75px">Consumed Capacity</span>
<svg width="16" height="16" viewBox="0 0 16 16" ><path d="M3 1.900H13C14.600 1.900 15 3.400 14.100 4.400L9.100 9.600V12.900L7 14.400V9.600L1.900 4.400C1 3.400 1.400 1.900 3 1.900ZM2.200 4.400H13.800" fill="none" stroke="#9a9ba8" stroke-width="1.350" stroke-linejoin="round"/></svg>
</div>
<div class="h" style="left:1350px;width:149px">
<span style="letter-spacing:0.66px">Available Capacity</span>
<svg width="16" height="16" viewBox="0 0 16 16" ><path d="M3 1.900H13C14.600 1.900 15 3.400 14.100 4.400L9.100 9.600V12.900L7 14.400V9.600L1.900 4.400C1 3.400 1.400 1.900 3 1.900ZM2.200 4.400H13.800" fill="none" stroke="#9a9ba8" stroke-width="1.350" stroke-linejoin="round"/></svg>
</div>
<div class="h" style="left:1500px;width:149px">
<span style="letter-spacing:0.8px">Bandwidth Utilization</span>
<svg width="16" height="16" viewBox="0 0 16 16" ><path d="M3 1.900H13C14.600 1.900 15 3.400 14.100 4.400L9.100 9.600V12.900L7 14.400V9.600L1.900 4.400C1 3.400 1.400 1.900 3 1.900ZM2.200 4.400H13.800" fill="none" stroke="#9a9ba8" stroke-width="1.350" stroke-linejoin="round"/></svg>
</div>
<div class="h" style="left:1650px;width:149px">
<span>Total Operations</span>
<svg width="16" height="16" viewBox="0 0 16 16" ><path d="M3 1.900H13C14.600 1.900 15 3.400 14.100 4.400L9.100 9.600V12.900L7 14.400V9.600L1.900 4.400C1 3.400 1.400 1.900 3 1.900ZM2.200 4.400H13.800" fill="none" stroke="#9a9ba8" stroke-width="1.350" stroke-linejoin="round"/></svg>
</div>
<div class="h" style="left:1800px;width:199px;justify-content:flex-start;padding-left:14px">
<span style="max-width:200px">Total Throughput</span>
<svg width="16" height="16" viewBox="0 0 16 16" ><path d="M3 1.900H13C14.600 1.900 15 3.400 14.100 4.400L9.100 9.600V12.900L7 14.400V9.600L1.900 4.400C1 3.400 1.400 1.900 3 1.900ZM2.200 4.400H13.800" fill="none" stroke="#9a9ba8" stroke-width="1.350" stroke-linejoin="round"/></svg>
</div>
<div class="hl" style="top:34px"></div>
<div class="c" style="left:0px;top:35px;width:149px">15</div>
<div class="c" style="left:150px;top:35px;width:149px">135</div>
<div class="c" style="left:300px;top:35px;width:149px">194 TiB</div>
<div class="c" style="left:450px;top:35px;width:149px">144 TiB</div>
<div class="c" style="left:600px;top:35px;width:149px">333 TiB</div>
<div class="g" style="left:756px;top:42px;width:68px;background:linear-gradient(90deg,#73bf69 0,#73bf69 36%,#a9cb53 55%,#fade2a 83%,#f58c44 92%,#f2495c 100%)"></div>
<div class="gt" style="left:800px;top:41px;width:82px">231.9%</div>
<div class="c" style="left:900px;top:35px;width:149px">202 TiB</div>
<div class="c" style="left:1050px;top:35px;width:149px">180 TiB</div>
<div class="g" style="left:1206px;top:42px;width:79px;background:#22252b"></div>
<div class="g" style="left:1206px;top:42px;width:3px;background:#73bf69;border-radius:2px"></div>
<div class="gt" style="left:1250px;top:41px;width:82px">3.9%</div>
<div class="c" style="left:1350px;top:35px;width:149px">137 TiB</div>
<div class="g" style="left:1506px;top:42px;width:53px;background:#22252b"></div>
<div class="g" style="left:1506px;top:42px;width:1px;background:#73bf69;border-radius:1px 0 0 1px"></div>
<div class="gt" style="left:1550px;top:41px;width:82px">0.0250%</div>
<div class="c" style="left:1650px;top:35px;width:149px">155 op/s</div>
<div class="c" style="left:1841.5px;top:35px;width:120px;text-align:left;letter-spacing:0">1.80 GiB/s</div>
<div class="vl" style="left:149px;top:34px;height:37px"></div>
<div class="vl" style="left:299px;top:34px;height:37px"></div>
<div class="vl" style="left:449px;top:34px;height:37px"></div>
<div class="vl" style="left:599px;top:34px;height:37px"></div>
<div class="vl" style="left:749px;top:34px;height:37px"></div>
<div class="vl" style="left:899px;top:34px;height:37px"></div>
<div class="vl" style="left:1049px;top:34px;height:37px"></div>
<div class="vl" style="left:1199px;top:34px;height:37px"></div>
<div class="vl" style="left:1349px;top:34px;height:37px"></div>
<div class="vl" style="left:1499px;top:34px;height:37px"></div>
<div class="vl" style="left:1649px;top:34px;height:37px"></div>
<div class="vl" style="left:1799px;top:34px;height:37px"></div>
</div>
<div class="abs" style="left:1831px;top:0;width:41px;height:32px;background:#2c2d33;border-radius:0 2px 0 2px"></div>
<svg class="abs" style="left:1839px;top:9px" width="8" height="14" viewBox="0 0 8 14"><circle cx="4" cy="2.400" r="1.200" fill="#c5c6d4"/><circle cx="4" cy="7" r="1.200" fill="#c5c6d4"/><circle cx="4" cy="11.600" r="1.200" fill="#c5c6d4"/></svg>
<svg class="abs" style="left:1854px;top:11px" width="10" height="10" viewBox="0 0 10 10"><path d="M2.200 3.700L5 6.500L7.800 3.700" fill="none" stroke="#b4b5c2" stroke-width="1.300" stroke-linecap="round" stroke-linejoin="round"/></svg>
</div>
</body></html>
